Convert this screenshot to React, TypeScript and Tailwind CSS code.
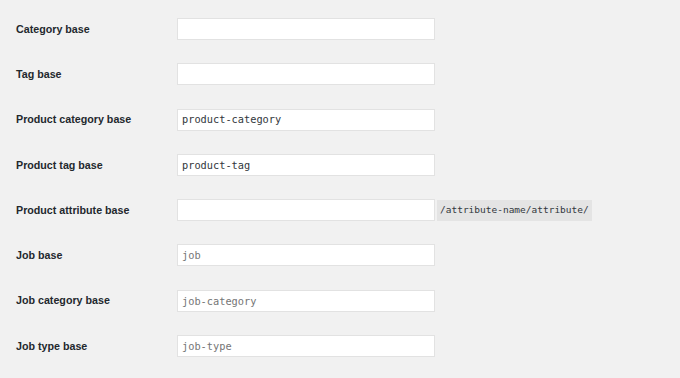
import React from "react";

const rows: { label: string; value?: string; placeholder?: string; code?: string }[] = [
  { label: "Category base" },
  { label: "Tag base" },
  { label: "Product category base", value: "product-category" },
  { label: "Product tag base", value: "product-tag" },
  { label: "Product attribute base", code: "/attribute-name/attribute/" },
  { label: "Job base", placeholder: "job" },
  { label: "Job category base", placeholder: "job-category" },
  { label: "Job type base", placeholder: "job-type" },
];

export default function App() {
  return (
    <div className="w-[680px] h-[378px] bg-[#f1f1f1] pt-[18px] pl-4 flex flex-col gap-[23.3px] overflow-hidden">
      {rows.map((r) => (
        <div key={r.label} className="flex items-center h-[22px]">
          <div
            className="w-[161px] shrink-0 text-[10.7px] font-bold text-[#23282d] leading-none"
            style={{ fontFamily: '"Liberation Sans", Arial, sans-serif' }}
          >
            {r.label}
          </div>
          <div className="w-[258px] h-[22px] shrink-0 bg-white border border-[#e2e2e2] flex items-center pl-[4px]">
            <span
              className={`text-[10.3px] leading-none ${r.placeholder ? "text-[#757575]" : "text-[#32373c]"}`}
              style={{ fontFamily: '"DejaVu Sans Mono", monospace' }}
            >
              {r.value ?? r.placeholder ?? ""}
            </span>
          </div>
          {r.code && (
            <span
              className="ml-[2px] h-[21px] flex items-center px-[3px] bg-[#e4e4e4] text-[#32373c] text-[9.5px] leading-none"
              style={{ fontFamily: '"DejaVu Sans Mono", monospace' }}
            >
              {r.code}
            </span>
          )}
        </div>
      ))}
    </div>
  );
}
